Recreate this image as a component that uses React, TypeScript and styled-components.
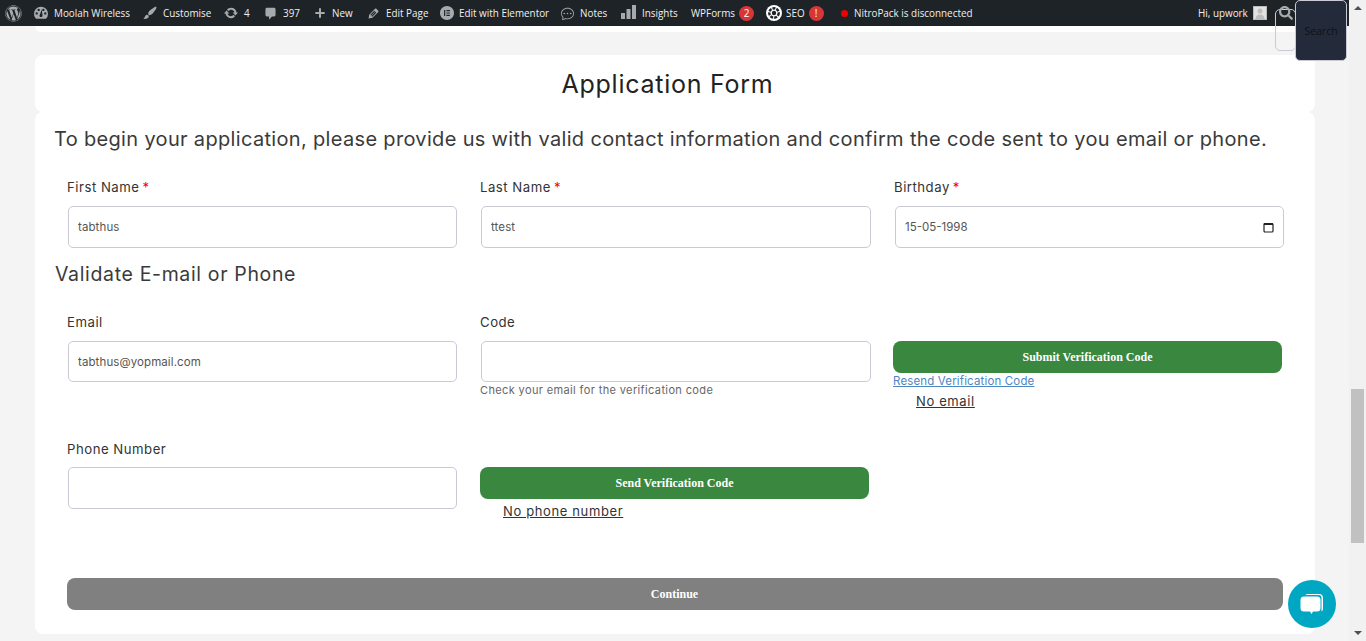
import React from "react";
import styled, { createGlobalStyle } from "styled-components";
import { FaWordpress, FaSearch } from "react-icons/fa";
import { SiElementor } from "react-icons/si";
import { BsChatDots } from "react-icons/bs";

const Global = createGlobalStyle`
    html, body { margin: 0; padding: 0; height: 641px; overflow: hidden; background: #f4f4f4; }
    * { box-sizing: border-box; }
    body { font-family: "Inter", "Liberation Sans", sans-serif; color: #333; }
`

const Shell = styled.div`
    display: flex;
    width: 1366px;
    height: 641px;
    position: relative;
    overflow: hidden;
`
const Page = styled.div`
    width: 1349px;
    display: flex;
    flex-direction: column;
    background: #f4f4f4;
`
const AdminBar = styled.div`
    height: 26px;
    background: #1d2327;
    display: flex;
    align-items: center;
    color: #f0f0f1;
    font-family: "Open Sans", "Liberation Sans", sans-serif;
    font-size: 9.9px;
    padding-left: 5px;
    white-space: nowrap;
    flex-shrink: 0;
`
const BarItem = styled.div<{ $w: number; $gap?: number }>`
    width: ${props => props.$w}px;
    flex-shrink: 0;
    display: flex;
    align-items: center;
    gap: ${props => props.$gap ?? 6}px;
    svg { color: #a7aaad; flex-shrink: 0; }
`
const BarSpacer = styled.div`
    flex: 1;
`
const Count = styled.span`
    display: inline-flex;
    align-items: center;
    justify-content: center;
    width: 15px;
    height: 15px;
    border-radius: 50%;
    background: #d63638;
    color: #fff;
    font-size: 10px;
`
const RedDot = styled.span`
    width: 7px;
    height: 7px;
    border-radius: 50%;
    background: #f00000;
`
const Avatar = styled.span`
    width: 14px;
    height: 14px;
    background: #e2e2e2;
    border: 1px solid #bbb;
    display: flex;
    svg { color: #bbb; }
`
const TopStub = styled.div`
    height: 6px;
    margin: 0 34px 23px 35px;
    background: #fff;
    border-radius: 0 0 8px 8px;
`
const HeadCard = styled.div`
    margin: 0 34px 0 35px;
    height: 57px;
    background: #fff;
    border-radius: 8px;
    display: flex;
    justify-content: center;
    align-items: center;
`
const Title = styled.h1`
    margin: 0 15px 0 0;
    font-family: "Inter", sans-serif;
    font-weight: 400;
    font-size: 25px;
    color: #222;
    letter-spacing: 0.75px;
`
const FormCard = styled.div`
    margin: 0 34px 0 35px;
    height: 522px;
    background: #fff;
    border-radius: 8px;
    padding: 15px 19px 0 19px;
`
const Intro = styled.p`
    margin: 0;
    height: 24px;
    line-height: 24px;
    font-size: 20px;
    letter-spacing: 0.33px;
    color: #3a3a3a;
    white-space: nowrap;
`
const Row = styled.div<{ $top: number; $h: number }>`
    display: grid;
    grid-template-columns: 413px 414px 414px;
    margin-top: ${props => props.$top}px;
    margin-left: 1px;
    height: ${props => props.$h}px;
`
const Cell = styled.div`
    padding-left: 12px;
    display: flex;
    flex-direction: column;
    align-items: flex-start;
`
const Label = styled.label<{ $gap?: number }>`
    height: 19px;
    line-height: 19px;
    font-size: 13.2px;
    letter-spacing: 0.5px;
    color: #333;
    margin-bottom: ${props => props.$gap ?? 9}px;
    white-space: nowrap;
`
const Req = styled.span`
    color: #f00000;
    margin-left: 3px;
`
const Input = styled.input<{ $h?: number; $w?: number }>`
    width: ${props => props.$w || 389}px;
    height: ${props => props.$h || 42}px;
    margin-left: 1px;
    border: 1px solid #c9cad6;
    border-radius: 5px;
    background: #fff;
    padding: 0 9px;
    font-family: "Inter", sans-serif;
    font-size: 11.5px;
    letter-spacing: 0.1px;
    color: #555;
    outline: none;
`
const DateBox = styled.div`
    width: 389px;
    height: 42px;
    margin-left: 1px;
    border: 1px solid #c9cad6;
    border-radius: 5px;
    padding: 0 9px;
    display: flex;
    align-items: center;
    justify-content: space-between;
    font-size: 11.5px;
    color: #555;
`
const Section = styled.h2`
    margin: 15px 0 0 1px;
    height: 22px;
    line-height: 22px;
    font-weight: 400;
    font-size: 19.5px;
    letter-spacing: 0.65px;
    color: #3a3a3a;
`
const Hint = styled.div`
    margin-top: 1px;
    font-size: 11px;
    line-height: 14px;
    letter-spacing: 0.37px;
    color: #666;
    white-space: nowrap;
`
const GreenButton = styled.button<{ $mt?: number; $ml?: number }>`
    width: 389px;
    height: 32px;
    margin-top: ${props => props.$mt || 0}px;
    margin-left: ${props => props.$ml || 0}px;
    border: 0;
    border-radius: 8px;
    background: #3a8740;
    color: #fff;
    font-family: "Liberation Serif", serif;
    font-weight: 700;
    font-size: 12px;
`
const Resend = styled.a`
    margin: 1px 0 0 -1px;
    font-size: 11.5px;
    line-height: 14px;
    letter-spacing: 0.15px;
    color: #4f86bf;
    text-decoration: underline;
    white-space: nowrap;
`
const Plain = styled.a<{ $ml: number; $mt: number }>`
    margin-left: ${props => props.$ml}px;
    margin-top: ${props => props.$mt}px;
    font-size: 13px;
    line-height: 16px;
    letter-spacing: 0.63px;
    color: #333;
    text-decoration: underline;
    white-space: nowrap;
`
const ContinueButton = styled.button`
    display: block;
    width: 1216px;
    height: 32px;
    margin: 0 0 0 13px;
    border: 0;
    border-radius: 8px;
    background: #808080;
    color: #fff;
    font-family: "Liberation Serif", serif;
    font-weight: 700;
    font-size: 12px;
    padding-left: 5px;
`
const Scrollbar = styled.div`
    width: 17px;
    background: #f1f1f1;
    display: flex;
    flex-direction: column;
    align-items: center;
    justify-content: space-between;
    position: relative;
`
const Arrow = styled.span<{ $up?: boolean }>`
    width: 0;
    height: 0;
    margin: 6px 0;
    border-left: 4px solid transparent;
    border-right: 4px solid transparent;
    ${props => props.$up ? "border-bottom: 4px solid #505050;" : "border-top: 4px solid #505050;"}
`
const Thumb = styled.div`
    position: absolute;
    left: 2px;
    top: 389px;
    width: 13px;
    height: 154px;
    background: #c1c1c1;
`
const SearchGhost = styled.div`
    position: absolute;
    left: 1275px;
    top: 9px;
    width: 21px;
    height: 42px;
    border: 1px solid #c9cad6;
    border-radius: 5px;
`
const SearchIcon = styled.div`
    position: absolute;
    left: 1279px;
    top: 6px;
    color: #a7aaad;
    display: flex;
`
const SearchTip = styled.div`
    position: absolute;
    left: 1295px;
    top: 0;
    width: 52px;
    height: 61px;
    background: #232b3b;
    border: 1px solid #c9cad6;
    border-radius: 5px;
    display: flex;
    align-items: center;
    justify-content: center;
    font-family: "Open Sans", sans-serif;
    font-size: 10.5px;
    color: #0e1118;
`
const ChatBubble = styled.div`
    position: absolute;
    left: 1288px;
    top: 580px;
    width: 48px;
    height: 48px;
    border-radius: 50%;
    background: #00a7c2;
    display: flex;
    align-items: center;
    justify-content: center;
`

const Dash = ({ size, d }: { size: number; d: string }) => (
    <svg width={size} height={size} viewBox="1 1 18 18" fill="#a7aaad">
        <path d={d} fillRule="evenodd" />
    </svg>
)
const DASHBOARD = "M10 2a9 9 0 0 0-9 9c0 2.600 1 4.900 2.700 6.500h12.600A9 9 0 0 0 19 11a9 9 0 0 0-9-9zM4.500 12a1.500 1.500 0 1 1 0-3 1.500 1.500 0 0 1 0 3zM7 7.500A1.500 1.500 0 1 1 7 4.500a1.500 1.500 0 0 1 0 3zm4 7.500a2 2 0 0 1-3-1.500l3-8 1 8.200a2 2 0 0 1-1 1.300zM13 7.500a1.500 1.500 0 1 1 0-3 1.500 1.500 0 0 1 0 3zM15.500 12a1.500 1.500 0 1 1 0-3 1.500 1.500 0 0 1 0 3z"
const BRUSH = "M18.330 3.570s.270-.800-.310-1.360c-.530-.520-1.220-.240-1.220-.240-.610.300-5.760 3.470-7.670 5.570-.860.960-2.060 3.790-1.090 4.820.920.980 3.960-.170 4.790-1 2.060-2.060 5.210-7.170 5.500-7.790zM1.400 17.650c2.370-1.560 1.460-3.410 3.230-4.850.930-.750 2.260-.660 3.090.220.830.880.840 2.330-.030 3.180-1.940 1.900-4.820 1.430-6.290 1.450z"
const UPDATE = "M10.200 3.280c3.530 0 6.430 2.610 6.920 6h2.080l-3.500 4-3.500-4h2.320c-.450-1.970-2.210-3.450-4.320-3.450-1.450 0-2.730.710-3.540 1.780L4.950 5.660C6.230 4.200 8.110 3.280 10.200 3.280zm-.400 13.440c-3.520 0-6.430-2.610-6.920-6H.800l3.500-4c1.170 1.330 2.330 2.670 3.500 4H5.480c.450 1.970 2.210 3.450 4.320 3.450 1.450 0 2.730-.710 3.540-1.780l1.710 1.950c-1.280 1.460-3.150 2.380-5.250 2.380z"
const COMMENT = "M5 2h10c1.100 0 2 .900 2 2v8c0 1.100-.900 2-2 2h-3l-4 4.500V14H5c-1.100 0-2-.900-2-2V4c0-1.100.900-2 2-2z"
const PLUS = "M17 8.500v3h-5.500V17h-3v-5.500H3v-3h5.500V3h3v5.500z"
const EDIT = "M13.890 3.390l2.710 2.720c.460.460.420 1.240.030 1.640l-8.010 8.020-5.560 1.160 1.160-5.580s7.600-7.630 7.990-8.030c.390-.390 1.220-.390 1.680.070zm-2.730 2.790l-5.590 5.610 1.110 1.110 5.540-5.650zm-2.970 8.230l5.580-5.600-1.070-1.080-5.590 5.600z"

const Bars = () => (
    <svg width="15" height="16" viewBox="0 0 15 16" fill="#a7aaad">
        <rect x="0" y="8" width="4" height="6" />
        <rect x="5.500" y="4" width="4" height="10" />
        <rect x="11" y="0" width="4" height="14" />
    </svg>
)
const SeoGear = () => (
    <svg width="16" height="16" viewBox="0 0 16 16">
        <circle cx="8" cy="8" r="8" fill="#fff" />
        <circle cx="8" cy="8" r="4.700" fill="none" stroke="#1d2327" strokeWidth="2.400" strokeDasharray="3 1" />
        <circle cx="8" cy="8" r="2.200" fill="#1d2327" />
    </svg>
)
const Person = () => (
    <svg width="12" height="12" viewBox="0 0 12 12" fill="#bdbdbd">
        <circle cx="6" cy="4" r="2.500" />
        <path d="M1.500 12c0-3 2-4.500 4.500-4.500s4.500 1.500 4.500 4.500z" />
    </svg>
)
const Calendar = () => (
    <svg width="11" height="11" viewBox="0 0 11 11" fill="none" stroke="#222">
        <rect x="1" y="1.500" width="9" height="8.500" rx="1" strokeWidth="1.200" />
        <rect x="1" y="1" width="9" height="2" fill="#222" stroke="none" />
    </svg>
)
const ChatIcon = () => (
    <svg width="26" height="26" viewBox="0 0 26 26" fill="#fff">
        <path d="M8 3h12a4 4 0 0 1 4 4v11a3 3 0 0 1-1.500 2.500V7a3 3 0 0 0-3-3H6.500A3 3 0 0 1 8 3z" />
        <path d="M5 5.500h13a3.500 3.500 0 0 1 3.500 3.500v8a3.500 3.500 0 0 1-3.500 3.500h-4l-1.500 2.500-1.500-2.500H5A3.500 3.500 0 0 1 1.500 17V9A3.500 3.500 0 0 1 5 5.500z" />
    </svg>
)

export default function App() {
    return (
        <Shell>
            <Global />
            <Page>
                <AdminBar>
                    <BarItem $w={29}><FaWordpress size={17} /></BarItem>
                    <BarItem $w={109}><Dash size={14} d={DASHBOARD} /> Moolah Wireless</BarItem>
                    <BarItem $w={81}><Dash size={14} d={BRUSH} /> Customise</BarItem>
                    <BarItem $w={40}><Dash size={14} d={UPDATE} /> 4</BarItem>
                    <BarItem $w={50}><Dash size={13} d={COMMENT} /> 397</BarItem>
                    <BarItem $w={53}><Dash size={12} d={PLUS} /> New</BarItem>
                    <BarItem $w={73}><Dash size={13} d={EDIT} /> Edit Page</BarItem>
                    <BarItem $w={121} $gap={5}><SiElementor size={14} /> Edit with Elementor</BarItem>
                    <BarItem $w={60}><BsChatDots size={13} /> Notes</BarItem>
                    <BarItem $w={70}><Bars /> Insights</BarItem>
                    <BarItem $w={75} $gap={4}>WPForms <Count>2</Count></BarItem>
                    <BarItem $w={75} $gap={4}><SeoGear /> SEO <Count>!</Count></BarItem>
                    <BarItem $w={160}><RedDot /> NitroPack is disconnected</BarItem>
                    <BarSpacer />
                    <BarItem $w={151} $gap={5}>Hi, upwork <Avatar><Person /></Avatar></BarItem>
                </AdminBar>
                <TopStub />
                <HeadCard><Title>Application Form</Title></HeadCard>
                <FormCard>
                    <Intro>To begin your application, please provide us with valid contact information and confirm the code sent to you email or phone.</Intro>
                    <Row $top={27} $h={70}>
                        <Cell>
                            <Label>First Name<Req>*</Req></Label>
                            <Input readOnly value="tabthus" />
                        </Cell>
                        <Cell>
                            <Label>Last Name<Req>*</Req></Label>
                            <Input $w={390} readOnly value="ttest" />
                        </Cell>
                        <Cell>
                            <Label>Birthday<Req>*</Req></Label>
                            <DateBox>15-05-1998 <Calendar /></DateBox>
                        </Cell>
                    </Row>
                    <Section>Validate E-mail or Phone</Section>
                    <Row $top={28} $h={127}>
                        <Cell>
                            <Label>Email</Label>
                            <Input $h={41} readOnly value="tabthus@yopmail.com" />
                        </Cell>
                        <Cell>
                            <Label>Code</Label>
                            <Input $h={41} $w={390} readOnly value="" />
                            <Hint>Check your email for the verification code</Hint>
                        </Cell>
                        <Cell>
                            <GreenButton $mt={28} $ml={-1}>Submit Verification Code</GreenButton>
                            <Resend>Resend Verification Code</Resend>
                            <Plain $ml={22} $mt={5}>No email</Plain>
                        </Cell>
                    </Row>
                    <Row $top={0} $h={138}>
                        <Cell>
                            <Label $gap={8}>Phone Number</Label>
                            <Input readOnly value="" />
                        </Cell>
                        <Cell>
                            <GreenButton $mt={27}>Send Verification Code</GreenButton>
                            <Plain $ml={23} $mt={4}>No phone number</Plain>
                        </Cell>
                    </Row>
                    <ContinueButton>Continue</ContinueButton>
                </FormCard>
            </Page>
            <Scrollbar>
                <Arrow $up />
                <Thumb />
                <Arrow />
            </Scrollbar>
            <SearchGhost />
            <SearchIcon><FaSearch size={14} /></SearchIcon>
            <SearchTip>Search</SearchTip>
            <ChatBubble><ChatIcon /></ChatBubble>
        </Shell>
    );
}
